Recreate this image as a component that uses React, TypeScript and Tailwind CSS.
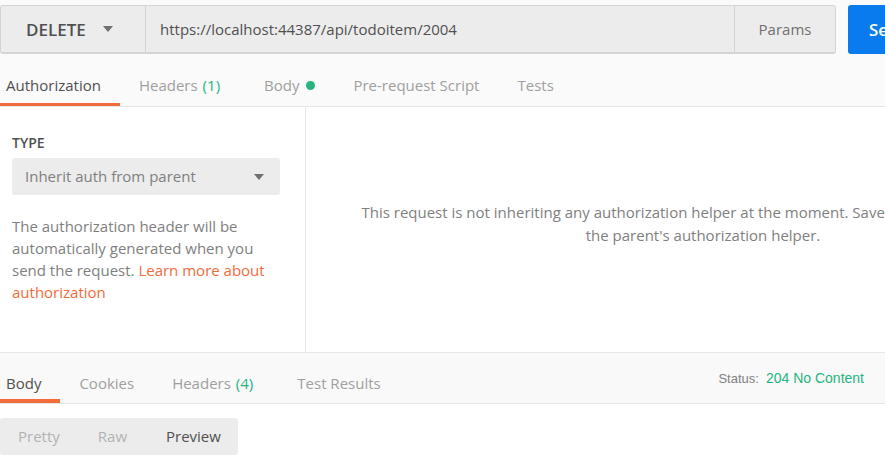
const font = { fontFamily: '"Open Sans", "Liberation Sans", sans-serif' };

function Caret({ className = '' }: { className?: string }) {
  return (
    <svg width="10" height="6" viewBox="0 0 10 6" className={className}>
      <path d="M0 0h10L5 6z" fill="#707070" />
    </svg>
  );
}

function RequestBar() {
  return (
    <div className="flex items-stretch pt-[5px] bg-[#fafafa]">
      <div className="flex items-center w-[146px] h-[49px] bg-[#ececec] border border-[#d4d4d4] border-b-2 rounded-l-[3px]">
        <span className="ml-[25px] pt-[1px] text-[17px] font-semibold text-[#505050]">DELETE</span>
        <Caret className="ml-[17px]" />
      </div>
      <div className="flex items-center w-[588px] h-[49px] bg-[#ececec] border-y border-[#d4d4d4] border-b-2">
        <span className="ml-[14px] pt-[1px] text-[15px] text-[#505050]">https://localhost:44387/api/todoitem/2004</span>
      </div>
      <div className="flex items-center justify-center w-[102px] h-[49px] bg-[#ececec] border border-[#d4d4d4] border-b-2 rounded-r-[3px]">
        <span className="pt-[1px] text-[15px] text-[#707070]">Params</span>
      </div>
      <div className="ml-[12px] flex items-center w-[100px] h-[49px] bg-[#097bed] rounded-[3px]">
        <span className="ml-[21px] text-[17px] font-semibold text-white">Send</span>
      </div>
    </div>
  );
}

function Count({ n }: { n: number }) {
  return <span className="ml-[5px] text-[#26b47f]">({n})</span>;
}

function RequestTabs() {
  return (
    <div className="flex h-[53px] bg-[#fafafa] border-b border-[#e6e6e6] text-[15px] text-[#a0a0a0]">
      <div className="flex items-center pl-[6px] pr-[19px] pt-[14px] border-b-[3px] border-[#f26b3a] text-[#505050]">Authorization</div>
      <div className="flex items-center pl-[19px] pr-[25px] pt-[14px] border-b-[3px] border-transparent">
        Headers<Count n={1} />
      </div>
      <div className="flex items-center px-[19px] pt-[14px] border-b-[3px] border-transparent">
        Body
        <span className="ml-[7px] w-[9px] h-[9px] rounded-full bg-[#26b47f]" />
      </div>
      <div className="flex items-center px-[19px] pt-[14px] border-b-[3px] border-transparent">Pre-request Script</div>
      <div className="flex items-center px-[19px] pt-[14px] border-b-[3px] border-transparent">Tests</div>
    </div>
  );
}

function AuthPanel() {
  return (
    <div className="flex h-[246px] bg-white border-b border-[#e6e6e6]">
      <div className="w-[306px] shrink-0 border-r border-[#e6e6e6] px-[12px] pt-[26px]">
        <div className="text-[14px] font-semibold text-[#505050] leading-[20px]">TYPE</div>
        <div className="mt-[5px] flex items-center justify-between w-[268px] h-[37px] bg-[#ececec] rounded-[3px] pl-[13px] pr-[16px]">
          <span className="text-[15px] text-[#808080]">Inherit auth from parent</span>
          <Caret />
        </div>
        <p className="mt-[20px] text-[15px] leading-[22px] text-[#808080] pr-[10px]">
          The authorization header will be automatically generated when you send the request.{' '}
          <span className="text-[#f26b3a]">Learn more about authorization</span>
        </p>
      </div>
      <div className="flex-1 pt-[94px] px-[20px] text-center text-[15px] leading-[23px] text-[#808080]">
        This request is not inheriting any authorization helper at the moment. Save it in a collection to use
        <br />
        the parent's authorization helper.
      </div>
    </div>
  );
}

function ResponseTabs() {
  return (
    <div className="flex items-stretch w-[885px] h-[51px] bg-[#f9f9f9] border-b border-[#e6e6e6] text-[15px] text-[#a0a0a0]">
      <div className="flex items-center pl-[6px] pr-[19px] pt-[15px] border-b-[4px] border-[#f26b3a] text-[#505050]">Body</div>
      <div className="flex items-center px-[19px] pt-[15px] border-b-[4px] border-transparent">Cookies</div>
      <div className="flex items-center px-[19px] pt-[15px] border-b-[4px] border-transparent">
        Headers<Count n={4} />
      </div>
      <div className="flex items-center px-[25px] pt-[15px] border-b-[4px] border-transparent">Test Results</div>
      <div
        className="ml-auto mr-[21px] flex items-center pt-[5px] pb-[4px] text-[13px]"
        style={{ fontFamily: '"Liberation Sans", Arial, sans-serif' }}
      >
        <span className="text-[#808080]">Status:</span>
        <span className="ml-[7px] text-[14px] text-[#26b47f]">204 No Content</span>
      </div>
    </div>
  );
}

function BodyModes() {
  return (
    <div className="bg-white pt-[14px] h-[60px]">
      <div className="flex items-center w-[238px] h-[37px] bg-[#ececec] rounded-[3px] text-[15px]">
        <span className="ml-[18px] text-[#b3b3b3]">Pretty</span>
        <span className="ml-[38px] text-[#b3b3b3]">Raw</span>
        <span className="ml-[39px] text-[#505050]">Preview</span>
      </div>
    </div>
  );
}

export default function App() {
  return (
    <div className="w-[885px] h-[460px] overflow-hidden bg-white" style={font}>
      <div className="w-[1100px]">
        <RequestBar />
        <RequestTabs />
        <AuthPanel />
        <ResponseTabs />
        <BodyModes />
      </div>
    </div>
  );
}
